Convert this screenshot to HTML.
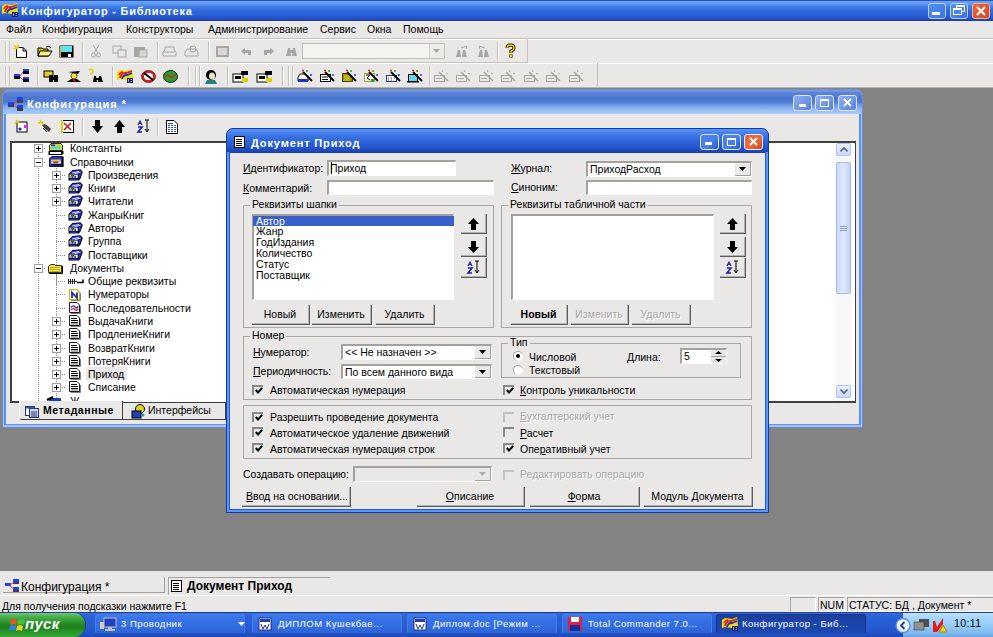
<!DOCTYPE html>
<html><head><meta charset="utf-8"><style>
*{margin:0;padding:0;box-sizing:border-box}
html,body{width:993px;height:637px;overflow:hidden;background:#838383;font-family:"Liberation Sans",sans-serif;font-size:10.5px;letter-spacing:0;color:#000}
.a{position:absolute}
.t{position:absolute;white-space:nowrap;line-height:11px}
.u{text-decoration:underline}
svg{overflow:visible}
</style></head><body>
<div class="a" style="left:0px;top:0px;width:993px;height:21px;background:linear-gradient(#2c52b8 0,#2c52b8 1px,#6aa2f4 1px,#5c98f0 4px,#3c7ae6 7px,#3068dc 11px,#2b60d6 15px,#2454ca 18px,#1c44b2 20px,#1a3ea8 21px)"></div>
<svg class="a" style="left:2px;top:3px;" width="16" height="14" viewBox="0 0 16 14"><path d="M0 3 L3 1 L10 2 L15 0 L16 9 L10 11 L3 10 L0 11Z" fill="#f0e000"/><path d="M3 9 Q4 4 9 4 L15 2" stroke="#e02020" stroke-width="1.8" fill="none"/><path d="M5 10 Q6 6 10 6 L15 4" stroke="#2030d0" stroke-width="1.8" fill="none"/><path d="M2 6 Q3 3 6 3" stroke="#e02020" stroke-width="1.4" fill="none"/><rect x="10" y="9" width="6" height="5" fill="#202060"/><path d="M11.5 10 L11.5 13 M13.5 10.5 L15 10.5 M13.5 12.5 L15 12.5" stroke="#c0c0ff" stroke-width="0.8"/></svg>
<div class="t" style="left:21px;top:5px;font-size:11px;font-weight:bold;color:#fff;letter-spacing:0.75px;line-height:13px">Конфигуратор - Библиотека</div>
<div class="a" style="left:928px;top:3px;width:18px;height:16px;border:1px solid #b8d0fa;border-radius:3px;background:linear-gradient(135deg,#5690f0 0,#3a72e0 100%)"></div>
<div class="a" style="left:950px;top:3px;width:18px;height:16px;border:1px solid #b8d0fa;border-radius:3px;background:linear-gradient(135deg,#5690f0 0,#3a72e0 100%)"></div>
<div class="a" style="left:972px;top:3px;width:18px;height:16px;border:1px solid #f4b090;border-radius:3px;background:linear-gradient(135deg,#e8683c 0,#d04a20 100%)"></div>
<div class="a" style="left:932px;top:12px;width:8px;height:3px;background:#fff"></div>
<div class="a" style="left:956px;top:5px;width:9px;height:7px;border:1px solid #fff;border-top-width:2px"></div>
<div class="a" style="left:953px;top:8px;width:9px;height:7px;border:1px solid #fff;border-top-width:2px;background:#4a84ec"></div>
<svg class="a" style="left:976px;top:6px;" width="10" height="10" viewBox="0 0 10 10"><path d="M1 1 L9 9 M9 1 L1 9" stroke="#fff" stroke-width="2"/></svg>
<div class="a" style="left:0px;top:21px;width:993px;height:67px;background:#e9e8e7"></div>
<div class="t" style="left:6px;top:24px;">Файл</div>
<div class="t" style="left:42px;top:24px;">Конфигурация</div>
<div class="t" style="left:126px;top:24px;">Конструкторы</div>
<div class="t" style="left:208px;top:24px;">Администрирование</div>
<div class="t" style="left:320px;top:24px;">Сервис</div>
<div class="t" style="left:367px;top:24px;">Окна</div>
<div class="t" style="left:403px;top:24px;">Помощь</div>
<div class="a" style="left:0px;top:38px;width:993px;height:1px;background:#c4c2bb"></div>
<div class="a" style="left:0px;top:39px;width:993px;height:1px;background:#fff"></div>
<div class="a" style="left:0px;top:62px;width:528px;height:1px;background:#c4c2bb"></div>
<div class="a" style="left:527px;top:39px;width:1px;height:24px;background:#c4c2bb"></div>
<div class="a" style="left:0px;top:63px;width:993px;height:1px;background:#fff"></div>
<div class="a" style="left:0px;top:87px;width:993px;height:1px;background:#b4b2ac"></div>
<div class="a" style="left:597px;top:63px;width:1px;height:25px;background:#c4c2bb"></div>
<div class="a" style="left:5px;top:41px;width:1px;height:20px;background:#c8c6bf"></div>
<div class="a" style="left:6px;top:41px;width:1px;height:20px;background:#fff"></div>
<div class="a" style="left:9px;top:41px;width:1px;height:20px;background:#c8c6bf"></div>
<div class="a" style="left:5px;top:66px;width:1px;height:20px;background:#c8c6bf"></div>
<div class="a" style="left:6px;top:66px;width:1px;height:20px;background:#fff"></div>
<div class="a" style="left:9px;top:66px;width:1px;height:20px;background:#c8c6bf"></div>
<div class="a" style="left:82px;top:41px;width:1px;height:20px;background:#c4c2bb"></div>
<div class="a" style="left:83px;top:41px;width:1px;height:20px;background:#fff"></div>
<div class="a" style="left:157px;top:41px;width:1px;height:20px;background:#c4c2bb"></div>
<div class="a" style="left:158px;top:41px;width:1px;height:20px;background:#fff"></div>
<div class="a" style="left:208px;top:41px;width:1px;height:20px;background:#c4c2bb"></div>
<div class="a" style="left:209px;top:41px;width:1px;height:20px;background:#fff"></div>
<div class="a" style="left:497px;top:41px;width:1px;height:20px;background:#c4c2bb"></div>
<div class="a" style="left:498px;top:41px;width:1px;height:20px;background:#fff"></div>
<div class="a" style="left:37px;top:66px;width:1px;height:20px;background:#c4c2bb"></div>
<div class="a" style="left:38px;top:66px;width:1px;height:20px;background:#fff"></div>
<div class="a" style="left:112px;top:66px;width:1px;height:20px;background:#c4c2bb"></div>
<div class="a" style="left:113px;top:66px;width:1px;height:20px;background:#fff"></div>
<div class="a" style="left:188px;top:66px;width:1px;height:20px;background:#c4c2bb"></div>
<div class="a" style="left:189px;top:66px;width:1px;height:20px;background:#fff"></div>
<div class="a" style="left:195px;top:66px;width:1px;height:20px;background:#c4c2bb"></div>
<div class="a" style="left:196px;top:66px;width:1px;height:20px;background:#fff"></div>
<div class="a" style="left:199px;top:66px;width:1px;height:20px;background:#c4c2bb"></div>
<div class="a" style="left:200px;top:66px;width:1px;height:20px;background:#fff"></div>
<div class="a" style="left:227px;top:66px;width:1px;height:20px;background:#c4c2bb"></div>
<div class="a" style="left:228px;top:66px;width:1px;height:20px;background:#fff"></div>
<div class="a" style="left:282px;top:66px;width:1px;height:20px;background:#c4c2bb"></div>
<div class="a" style="left:283px;top:66px;width:1px;height:20px;background:#fff"></div>
<div class="a" style="left:288px;top:66px;width:1px;height:20px;background:#c4c2bb"></div>
<div class="a" style="left:289px;top:66px;width:1px;height:20px;background:#fff"></div>
<div class="a" style="left:292px;top:66px;width:1px;height:20px;background:#c4c2bb"></div>
<div class="a" style="left:293px;top:66px;width:1px;height:20px;background:#fff"></div>
<div class="a" style="left:429px;top:66px;width:1px;height:20px;background:#c4c2bb"></div>
<div class="a" style="left:430px;top:66px;width:1px;height:20px;background:#fff"></div>
<svg class="a" style="left:13px;top:44px;" width="15" height="14" viewBox="0 0 15 14"><path d="M3.5 3.5 L10 3.5 L13.5 7 L13.5 13.5 L3.5 13.5Z" fill="#fff" stroke="#000"/><path d="M10 3.5 L10 7 L13.5 7" fill="none" stroke="#000"/><path d="M1 1 L5 5 M5 0.5 L5 4 M0.5 4.5 L4 4.5" stroke="#e8d000" stroke-width="1.6"/></svg>
<svg class="a" style="left:37px;top:45px;" width="16" height="12" viewBox="0 0 16 12"><path d="M1 3 L5 3 L6 4 L11 4 L11 11 L1 11Z" fill="#d8c000" stroke="#000"/><path d="M3 6 L15 6 L12 11 L1 11Z" fill="#f8f080" stroke="#000"/><path d="M9 2 Q12 0 14 3" stroke="#000" fill="none"/></svg>
<svg class="a" style="left:59px;top:45px;" width="15" height="13" viewBox="0 0 15 13"><rect x="0.5" y="0.5" width="14" height="12" fill="#000"/><rect x="2" y="1" width="11" height="6" fill="#60e0f0"/><rect x="1" y="1" width="1" height="11" fill="#c8b800"/><rect x="9" y="9" width="3" height="3" fill="#fff"/></svg>
<svg class="a" style="left:91px;top:44px;" width="10" height="14" viewBox="0 0 10 14"><path d="M2 1 L7 9 M8 1 L3 9" stroke="#a8a6a0"/><circle cx="2.5" cy="11" r="2" fill="none" stroke="#a8a6a0"/><circle cx="7.5" cy="11" r="2" fill="none" stroke="#a8a6a0"/></svg>
<svg class="a" style="left:112px;top:45px;" width="15" height="13" viewBox="0 0 15 13"><rect x="1" y="1" width="8" height="7" fill="none" stroke="#a8a6a0"/><rect x="6" y="5" width="8" height="7" fill="#e8e6e0" stroke="#a8a6a0"/></svg>
<svg class="a" style="left:133px;top:45px;" width="15" height="13" viewBox="0 0 15 13"><rect x="1" y="2" width="11" height="10" fill="#a8a6a0"/><rect x="6" y="5" width="8" height="7" fill="#d8d6d0" stroke="#a8a6a0"/></svg>
<svg class="a" style="left:162px;top:46px;" width="15" height="11" viewBox="0 0 15 11"><path d="M3 1 L12 1 L12 4 L14 6 L14 10 L1 10 L1 6 L3 4Z" fill="none" stroke="#a8a6a0"/><path d="M2 6 L13 6" stroke="#a8a6a0"/></svg>
<svg class="a" style="left:184px;top:45px;" width="16" height="12" viewBox="0 0 16 12"><path d="M3 4 L12 4 L14 7 L14 11 L1 11 L1 7Z" fill="none" stroke="#a8a6a0"/><circle cx="9" cy="4" r="3" fill="none" stroke="#a8a6a0"/></svg>
<svg class="a" style="left:215px;top:45px;" width="15" height="13" viewBox="0 0 15 13"><rect x="1" y="1" width="13" height="11" fill="#a8a6a0"/><rect x="3" y="3" width="9" height="7" fill="#d8d6d0"/></svg>
<svg class="a" style="left:240px;top:47px;" width="13" height="9" viewBox="0 0 13 9"><path d="M1 4 L5 1 L5 3 L11 3 L11 8 L8 8 L8 6 L5 6 L5 8Z" fill="#a8a6a0"/></svg>
<svg class="a" style="left:263px;top:47px;" width="12" height="9" viewBox="0 0 12 9"><path d="M11 4 L7 1 L7 3 L1 3 L1 8 L4 8 L4 6 L7 6 L7 8Z" fill="#a8a6a0"/></svg>
<svg class="a" style="left:285px;top:45px;" width="13" height="12" viewBox="0 0 13 12"><path d="M1 11 L3 3 L5 3 L6 11Z M7 11 L8 3 L10 3 L12 11Z" fill="#a8a6a0"/><rect x="4" y="5" width="5" height="3" fill="#a8a6a0"/></svg>
<div class="a" style="left:302px;top:43px;width:143px;height:16px;background:#f4f3ef;border:1px solid #c0beb8"></div>
<div class="a" style="left:429px;top:44px;width:15px;height:14px;background:#ecebe6;border-left:1px solid #d0cec8"></div>
<svg class="a" style="left:433px;top:49px;" width="7" height="4" viewBox="0 0 7 4"><path d="M0 0 L7 0 L3.5 4Z" fill="#a8a6a0"/></svg>
<svg class="a" style="left:455px;top:45px;" width="14" height="13" viewBox="0 0 14 13"><path d="M1 12 L3 5 L5 5 L6 12Z M7 12 L8 5 L10 5 L12 12Z" fill="#a8a6a0"/><path d="M6 3 L12 1 L11 4" stroke="#a8a6a0" fill="none"/></svg>
<svg class="a" style="left:477px;top:45px;" width="14" height="13" viewBox="0 0 14 13"><path d="M1 12 L3 5 L5 5 L6 12Z M7 12 L8 5 L10 5 L12 12Z" fill="#a8a6a0"/><path d="M8 3 L2 1 L3 4" stroke="#a8a6a0" fill="none"/></svg>
<svg class="a" style="left:505px;top:44px;" width="11" height="14" viewBox="0 0 11 14"><path d="M2 4 Q2 1 5.5 1 Q9 1 9 4 Q9 6 6 7 L6 9" stroke="#000" stroke-width="3" fill="none"/><path d="M2 4 Q2 1 5.5 1 Q9 1 9 4 Q9 6 6 7 L6 9" stroke="#f0e000" stroke-width="1.4" fill="none"/><rect x="4.5" y="10.5" width="3" height="3" fill="#000"/><rect x="5" y="11" width="2" height="2" fill="#f0e000"/></svg>
<svg class="a" style="left:13px;top:69px;" width="17" height="13" viewBox="0 0 17 13"><rect x="1" y="5" width="6" height="5" fill="#000"/><rect x="1" y="5" width="6" height="2" fill="#2040f0"/><rect x="10" y="0" width="6" height="5" fill="#000"/><rect x="10" y="0" width="6" height="2" fill="#2040f0"/><rect x="10" y="8" width="6" height="5" fill="#000"/><rect x="10" y="8" width="6" height="2" fill="#2040f0"/><path d="M7 7 L10 3 M7 8 L10 11" stroke="#d04040"/></svg>
<svg class="a" style="left:43px;top:70px;" width="17" height="13" viewBox="0 0 17 13"><rect x="1" y="1" width="9" height="6" fill="#e0d020" stroke="#000"/><rect x="6" y="5" width="4" height="7" fill="#000"/><rect x="11" y="5" width="4" height="7" fill="#000"/><rect x="9" y="7" width="3" height="3" fill="#000"/></svg>
<svg class="a" style="left:66px;top:69px;" width="16" height="14" viewBox="0 0 16 14"><path d="M2 3 L14 2 L12 5Z" fill="#000"/><circle cx="8" cy="7" r="3" fill="#f0e040" stroke="#000" stroke-width="0.6"/><path d="M1 13 L5 10 L11 10 L15 13Z" fill="#000"/><path d="M7 10 L9 13" stroke="#c02020" stroke-width="1.5"/></svg>
<svg class="a" style="left:88px;top:69px;" width="16" height="14" viewBox="0 0 16 14"><path d="M1 1 Q4 -1 5 2 Q5 4 3 5 L3 6" stroke="#e0d000" stroke-width="1.6" fill="none"/><path d="M5 13 L6 7 L8 7 L9 13Z M10 13 L11 7 L13 7 L15 13Z" fill="#000"/><rect x="7" y="9" width="5" height="2" fill="#000"/></svg>
<svg class="a" style="left:117px;top:69px;" width="16" height="14" viewBox="0 0 16 14"><path d="M0 3 L3 1 L10 2 L15 0 L16 9 L10 11 L3 10 L0 11Z" fill="#f0e000"/><path d="M3 9 Q4 4 9 4 L15 2" stroke="#e02020" stroke-width="1.8" fill="none"/><path d="M5 10 Q6 6 10 6 L15 4" stroke="#2030d0" stroke-width="1.8" fill="none"/><path d="M2 6 Q3 3 6 3" stroke="#e02020" stroke-width="1.4" fill="none"/><rect x="10" y="9" width="6" height="5" fill="#202060"/><path d="M11.5 10 L11.5 13 M13.5 10.5 L15 10.5 M13.5 12.5 L15 12.5" stroke="#c0c0ff" stroke-width="0.8"/></svg>
<svg class="a" style="left:141px;top:70px;" width="15" height="13" viewBox="0 0 15 13"><ellipse cx="7.5" cy="6.5" rx="7" ry="6" fill="#e02020" stroke="#000" stroke-width="0.6"/><ellipse cx="7.5" cy="6.5" rx="4.5" ry="3.5" fill="#fff"/><path d="M3 3 L12 10" stroke="#000" stroke-width="2"/></svg>
<svg class="a" style="left:163px;top:70px;" width="15" height="13" viewBox="0 0 15 13"><ellipse cx="7.5" cy="6.5" rx="7" ry="6" fill="#20a030" stroke="#000" stroke-width="0.8"/><path d="M2 7 L5 5 L8 8 L13 4" stroke="#e02020" stroke-width="1.5" fill="none"/></svg>
<svg class="a" style="left:203px;top:69px;" width="16" height="15" viewBox="0 0 16 15"><ellipse cx="8" cy="6" rx="5" ry="5" fill="#000"/><ellipse cx="9" cy="7" rx="3" ry="3.5" fill="#f0e0c0"/><path d="M2 15 L4 11 L12 11 L14 15Z" fill="#208080"/></svg>
<svg class="a" style="left:232px;top:69px;" width="17" height="14" viewBox="0 0 17 14"><rect x="1" y="5" width="10" height="8" fill="#fff" stroke="#000"/><rect x="3" y="7" width="6" height="3" fill="#000"/><path d="M9 2 L16 2 L16 6 L9 6Z" fill="#000"/><rect x="10" y="9" width="6" height="4" fill="#e0d000"/></svg>
<svg class="a" style="left:256px;top:69px;" width="17" height="14" viewBox="0 0 17 14"><rect x="1" y="5" width="10" height="8" fill="#fff" stroke="#000"/><rect x="3" y="7" width="6" height="3" fill="#000"/><path d="M9 2 L16 2 L16 6 L9 6Z" fill="#000"/><rect x="10" y="9" width="6" height="4" fill="#e0d000"/></svg>
<svg class="a" style="left:297px;top:69px;" width="17" height="15" viewBox="0 0 17 15"><path d="M1 8 L3 5 L9 5 L11 8 L11 12 L1 12Z" fill="#fff" stroke="#000" stroke-width="0.9"/><rect x="1" y="10" width="10" height="3" fill="#2030c0"/><path d="M6 3 L15 12" stroke="#000" stroke-width="1.8"/><circle cx="6" cy="1.5" r="1.1" fill="#e03030"/><circle cx="10" cy="2" r="1.1" fill="#20b020"/><circle cx="14" cy="6" r="1.1" fill="#3040e0"/></svg>
<svg class="a" style="left:319px;top:69px;" width="17" height="15" viewBox="0 0 17 15"><rect x="1.5" y="5.5" width="10" height="7" fill="#fff" stroke="#000"/><path d="M3 8 L9 8 M3 10.5 L9 10.5" stroke="#000"/><path d="M6 3 L15 12" stroke="#000" stroke-width="1.8"/><circle cx="6" cy="1.5" r="1.1" fill="#e03030"/><circle cx="10" cy="2" r="1.1" fill="#20b020"/><circle cx="14" cy="6" r="1.1" fill="#3040e0"/></svg>
<svg class="a" style="left:341px;top:69px;" width="17" height="15" viewBox="0 0 17 15"><path d="M1.5 4.5 L8 4.5 L11.5 8 L11.5 12.5 L1.5 12.5Z" fill="#a09000" stroke="#404000"/><path d="M3 7 L9 7 M3 9 L9 9 M3 11 L9 11" stroke="#e0d040"/><path d="M6 3 L15 12" stroke="#000" stroke-width="1.8"/><circle cx="6" cy="1.5" r="1.1" fill="#e03030"/><circle cx="10" cy="2" r="1.1" fill="#20b020"/><circle cx="14" cy="6" r="1.1" fill="#3040e0"/></svg>
<svg class="a" style="left:363px;top:69px;" width="17" height="15" viewBox="0 0 17 15"><rect x="1.5" y="4.5" width="10" height="8" fill="#fff" stroke="#b0a040"/><path d="M3 6 L7 6 L4 9 L7 11" stroke="#000" fill="none"/><rect x="8" y="10" width="3" height="3" fill="#20a020"/><path d="M6 3 L15 12" stroke="#000" stroke-width="1.8"/><circle cx="6" cy="1.5" r="1.1" fill="#e03030"/><circle cx="10" cy="2" r="1.1" fill="#20b020"/><circle cx="14" cy="6" r="1.1" fill="#3040e0"/></svg>
<svg class="a" style="left:385px;top:69px;" width="17" height="15" viewBox="0 0 17 15"><rect x="1.5" y="6.5" width="10" height="6" fill="#fff" stroke="#2030a0"/><path d="M3 9 L4 9 M6 9 L7 9 M9 9 L10 9 M3 11 L4 11 M6 11 L7 11" stroke="#404040"/><path d="M6 3 L15 12" stroke="#000" stroke-width="1.8"/><circle cx="6" cy="1.5" r="1.1" fill="#e03030"/><circle cx="10" cy="2" r="1.1" fill="#20b020"/><circle cx="14" cy="6" r="1.1" fill="#3040e0"/></svg>
<svg class="a" style="left:407px;top:69px;" width="17" height="15" viewBox="0 0 17 15"><rect x="1.5" y="5.5" width="9" height="7" fill="#60d8f0" stroke="#000"/><rect x="0" y="12" width="12" height="1.5" fill="#000"/><path d="M6 3 L15 12" stroke="#000" stroke-width="1.8"/><circle cx="6" cy="1.5" r="1.1" fill="#e03030"/><circle cx="10" cy="2" r="1.1" fill="#20b020"/><circle cx="14" cy="6" r="1.1" fill="#3040e0"/></svg>
<svg class="a" style="left:433px;top:69px;" width="17" height="15" viewBox="0 0 17 15"><rect x="1.5" y="6.5" width="10" height="6" fill="none" stroke="#a8a6a0"/><path d="M3 9.5 L9 9.5" stroke="#a8a6a0"/><path d="M6 3 L15 12" stroke="#a8a6a0" stroke-width="1.6"/><path d="M9 1 L10 3 M13 4 L15 5" stroke="#a8a6a0"/></svg>
<svg class="a" style="left:455px;top:69px;" width="17" height="15" viewBox="0 0 17 15"><rect x="1.5" y="6.5" width="10" height="6" fill="none" stroke="#a8a6a0"/><path d="M3 9.5 L9 9.5" stroke="#a8a6a0"/><path d="M6 3 L15 12" stroke="#a8a6a0" stroke-width="1.6"/><path d="M9 1 L10 3 M13 4 L15 5" stroke="#a8a6a0"/></svg>
<svg class="a" style="left:478px;top:69px;" width="17" height="15" viewBox="0 0 17 15"><rect x="1.5" y="6.5" width="10" height="6" fill="none" stroke="#a8a6a0"/><path d="M3 9.5 L9 9.5" stroke="#a8a6a0"/><path d="M6 3 L15 12" stroke="#a8a6a0" stroke-width="1.6"/><path d="M9 1 L10 3 M13 4 L15 5" stroke="#a8a6a0"/></svg>
<svg class="a" style="left:500px;top:69px;" width="17" height="15" viewBox="0 0 17 15"><rect x="1.5" y="6.5" width="10" height="6" fill="none" stroke="#a8a6a0"/><path d="M3 9.5 L9 9.5" stroke="#a8a6a0"/><path d="M6 3 L15 12" stroke="#a8a6a0" stroke-width="1.6"/><path d="M9 1 L10 3 M13 4 L15 5" stroke="#a8a6a0"/></svg>
<svg class="a" style="left:523px;top:69px;" width="17" height="15" viewBox="0 0 17 15"><rect x="1.5" y="6.5" width="10" height="6" fill="none" stroke="#a8a6a0"/><path d="M3 9.5 L9 9.5" stroke="#a8a6a0"/><path d="M6 3 L15 12" stroke="#a8a6a0" stroke-width="1.6"/><path d="M9 1 L10 3 M13 4 L15 5" stroke="#a8a6a0"/></svg>
<svg class="a" style="left:545px;top:69px;" width="17" height="15" viewBox="0 0 17 15"><rect x="1.5" y="6.5" width="10" height="6" fill="none" stroke="#a8a6a0"/><path d="M3 9.5 L9 9.5" stroke="#a8a6a0"/><path d="M6 3 L15 12" stroke="#a8a6a0" stroke-width="1.6"/><path d="M9 1 L10 3 M13 4 L15 5" stroke="#a8a6a0"/></svg>
<svg class="a" style="left:568px;top:69px;" width="17" height="15" viewBox="0 0 17 15"><rect x="1.5" y="6.5" width="10" height="6" fill="none" stroke="#a8a6a0"/><path d="M3 9.5 L9 9.5" stroke="#a8a6a0"/><path d="M6 3 L15 12" stroke="#a8a6a0" stroke-width="1.6"/><path d="M9 1 L10 3 M13 4 L15 5" stroke="#a8a6a0"/></svg>
<div class="a" style="left:0px;top:571px;width:993px;height:41px;background:#e9e8e7"></div>
<div class="a" style="left:0px;top:595px;width:993px;height:1px;background:#fff"></div>
<div class="a" style="left:3px;top:592px;width:162px;height:1px;background:#a4a29c"></div>
<div class="a" style="left:164px;top:577px;width:1px;height:16px;background:#a4a29c"></div>
<svg class="a" style="left:4px;top:578px;" width="16" height="14" viewBox="0 0 16 14"><rect x="9" y="1" width="6" height="3" fill="#2040f0"/><rect x="9" y="4" width="6" height="2" fill="#404040"/><rect x="1" y="5" width="6" height="3" fill="#2040f0"/><rect x="9" y="9" width="6" height="3" fill="#2040f0"/><rect x="9" y="12" width="6" height="2" fill="#404040"/><path d="M6 7 L10 4 M6 8 L10 11" stroke="#d04040"/></svg>
<div class="t" style="left:21px;top:581px;font-size:12px;line-height:13px">Конфигурация *</div>
<div class="a" style="left:168px;top:577px;width:162px;height:1px;background:#a4a29c"></div>
<div class="a" style="left:168px;top:577px;width:1px;height:18px;background:#a4a29c"></div>
<div class="a" style="left:169px;top:578px;width:1px;height:17px;background:#fff"></div>
<svg class="a" style="left:171px;top:580px;" width="12" height="12" viewBox="0 0 12 12"><rect x="0.5" y="0.5" width="10" height="11" fill="#fff" stroke="#000"/><path d="M2 3.5 L8 3.5 M2 5.5 L8 5.5 M2 7.5 L8 7.5 M2 9.5 L8 9.5" stroke="#000"/></svg>
<div class="t" style="left:187px;top:580px;font-weight:bold;font-size:12px;letter-spacing:0;line-height:13px">Документ Приход</div>
<div class="t" style="left:2px;top:601px;">Для получения подсказки нажмите F1</div>
<div class="a" style="left:790px;top:597px;width:26px;height:15px;border-top:1px solid #a8a6a0;border-left:1px solid #a8a6a0;border-bottom:1px solid #fff;border-right:1px solid #fff"></div>
<div class="a" style="left:818px;top:597px;width:27px;height:15px;border-top:1px solid #a8a6a0;border-left:1px solid #a8a6a0;border-bottom:1px solid #fff;border-right:1px solid #fff"></div>
<div class="t" style="left:820px;top:600px;">NUM</div>
<div class="a" style="left:847px;top:597px;width:146px;height:15px;border-top:1px solid #a8a6a0;border-left:1px solid #a8a6a0;border-bottom:1px solid #fff"></div>
<div class="t" style="left:849px;top:600px;">СТАТУС: БД , Документ *</div>
<div class="a" style="left:0px;top:612px;width:993px;height:25px;background:linear-gradient(#3c7cec 0,#2e68dc 2px,#2a62d8 5px,#275cd4 14px,#2456cc 20px,#1e48b8 25px)"></div>
<div class="a" style="left:0px;top:612px;width:993px;height:1px;background:#22409c"></div>
<div class="a" style="left:0px;top:613px;width:85px;height:24px;border-radius:0 11px 11px 0;background:linear-gradient(#78c878 0,#50b450 3px,#38a038 7px,#268a26 11px,#1f7f1f 14px,#2a962a 19px,#34aa34 24px);box-shadow:1px 0 1px #183c80"></div>
<svg class="a" style="left:10px;top:617px;" width="16" height="16" viewBox="0 0 16 16"><path d="M1 3 Q4 1 7 3 L6 8 Q3 6 0 8Z" fill="#f05020"/><path d="M8 3 Q11 1 15 3 L14 8 Q11 6 7 8Z" fill="#40c040"/><path d="M0 9 Q3 7 6 9 L5 14 Q2 12 -1 14Z" fill="#3080f0"/><path d="M7 9 Q10 7 13 9 L12 14 Q9 12 6 14Z" fill="#f0d020"/></svg>
<div class="t" style="left:25px;top:615px;font-size:15px;font-weight:bold;font-style:italic;color:#fff;letter-spacing:0.3px;line-height:17px">пуск</div>
<div class="a" style="left:95px;top:614px;width:150px;height:20px;border-radius:3px;background:linear-gradient(#3c7aec 0,#3672e6 5px,#306ade 14px,#2c62d6 19px);border:1px solid #4680ea;border-bottom-color:#2050c0"></div>
<div class="t" style="left:121px;top:618px;color:#fff;font-size:9.5px;letter-spacing:0.5px">3 Проводник</div>
<div class="a" style="left:252px;top:614px;width:150px;height:20px;border-radius:3px;background:linear-gradient(#3c7aec 0,#3672e6 5px,#306ade 14px,#2c62d6 19px);border:1px solid #4680ea;border-bottom-color:#2050c0"></div>
<div class="t" style="left:278px;top:618px;color:#fff;font-size:9.5px;letter-spacing:0.5px">ДИПЛОМ Кушекбае...</div>
<div class="a" style="left:407px;top:614px;width:150px;height:20px;border-radius:3px;background:linear-gradient(#3c7aec 0,#3672e6 5px,#306ade 14px,#2c62d6 19px);border:1px solid #4680ea;border-bottom-color:#2050c0"></div>
<div class="t" style="left:433px;top:618px;color:#fff;font-size:9.5px;letter-spacing:0.5px">Диплом.doc [Режим ...</div>
<div class="a" style="left:562px;top:614px;width:150px;height:20px;border-radius:3px;background:linear-gradient(#3c7aec 0,#3672e6 5px,#306ade 14px,#2c62d6 19px);border:1px solid #4680ea;border-bottom-color:#2050c0"></div>
<div class="t" style="left:588px;top:618px;color:#fff;font-size:9.5px;letter-spacing:0.5px">Total Commander 7.0...</div>
<div class="a" style="left:716px;top:614px;width:150px;height:20px;border-radius:3px;background:linear-gradient(#1a40a0 0,#1e48b0 100%);border:1px solid #163480;border-bottom-color:#2050c0"></div>
<div class="t" style="left:742px;top:618px;color:#fff;font-size:9.5px;letter-spacing:0.5px">Конфигуратор - Биб...</div>
<svg class="a" style="left:100px;top:617px;" width="17" height="14" viewBox="0 0 17 14"><rect x="4" y="1" width="12" height="9" fill="#2040c0" stroke="#c0c0c0"/><rect x="8" y="10" width="4" height="2" fill="#c0c0c0"/><rect x="5" y="12" width="10" height="2" fill="#c0c0c0"/><rect x="0" y="5" width="4" height="7" fill="#d0d0b0"/></svg>
<svg class="a" style="left:238px;top:622px;" width="7" height="4" viewBox="0 0 7 4"><path d="M0 0 L7 0 L3.5 4Z" fill="#fff"/></svg>
<svg class="a" style="left:258px;top:617px;" width="15" height="14" viewBox="0 0 15 14"><rect x="1" y="1" width="12" height="12" fill="#fff" stroke="#203080"/><rect x="2" y="2" width="10" height="3" fill="#2040b0"/><path d="M3 7 L5 12 L7 8 L9 12 L11 7" stroke="#203080" fill="none"/></svg>
<svg class="a" style="left:413px;top:617px;" width="15" height="14" viewBox="0 0 15 14"><rect x="1" y="1" width="12" height="12" fill="#fff" stroke="#203080"/><rect x="2" y="2" width="10" height="3" fill="#2040b0"/><path d="M3 7 L5 12 L7 8 L9 12 L11 7" stroke="#203080" fill="none"/></svg>
<svg class="a" style="left:568px;top:617px;" width="14" height="14" viewBox="0 0 14 14"><rect x="0" y="0" width="14" height="14" fill="#e02040"/><rect x="3" y="0" width="8" height="5" fill="#fff"/><rect x="2" y="8" width="10" height="6" fill="#1030a0"/></svg>
<svg class="a" style="left:722px;top:617px;" width="16" height="14" viewBox="0 0 16 14"><path d="M0 3 L3 1 L10 2 L15 0 L16 9 L10 11 L3 10 L0 11Z" fill="#f0e000"/><path d="M3 9 Q4 4 9 4 L15 2" stroke="#e02020" stroke-width="1.8" fill="none"/><path d="M5 10 Q6 6 10 6 L15 4" stroke="#2030d0" stroke-width="1.8" fill="none"/><path d="M2 6 Q3 3 6 3" stroke="#e02020" stroke-width="1.4" fill="none"/><rect x="10" y="9" width="6" height="5" fill="#202060"/><path d="M11.5 10 L11.5 13 M13.5 10.5 L15 10.5 M13.5 12.5 L15 12.5" stroke="#c0c0ff" stroke-width="0.8"/></svg>
<div class="a" style="left:903px;top:613px;width:90px;height:24px;background:linear-gradient(#c0e4fc 0,#a8d8fa 4px,#98ccf6 12px,#80b8f0 20px,#6aa4e8 24px)"></div>
<svg class="a" style="left:895px;top:618px;" width="16" height="15" viewBox="0 0 16 15"><circle cx="8" cy="7.5" r="7" fill="#f0f6ff" stroke="#5a8ad8" stroke-width="1.4"/><path d="M9.5 4 L6 7.5 L9.5 11" stroke="#203880" stroke-width="1.8" fill="none"/></svg>
<svg class="a" style="left:914px;top:619px;" width="16" height="12" viewBox="0 0 16 12"><rect x="5" y="0" width="10" height="8" fill="#505050"/><rect x="0" y="3" width="10" height="8" fill="#909090" stroke="#404040" stroke-width="0.6"/></svg>
<svg class="a" style="left:933px;top:618px;" width="15" height="16" viewBox="0 0 15 16"><path d="M0 3 L2 3 L4 9 L10 0 L10 6 L4 14 L0 14Z" fill="#e81818"/><path d="M6 14 L10 7 L14 14Z" fill="#f0d000" stroke="#907000" stroke-width="0.7"/></svg>
<div class="t" style="left:954px;top:618px;color:#000;font-size:10.5px;letter-spacing:0.4px">10:11</div>
<div class="a" style="left:2px;top:89px;width:861px;height:339px;border-radius:7px 7px 0 0;background:#a6c2f4;border:1px solid #6a8cd6"></div>
<div class="a" style="left:3px;top:90px;width:859px;height:24px;border-radius:6px 6px 0 0;background:linear-gradient(#7c9ee6 0,#5a82d6 3px,#4c76d2 8px,#4f7ad4 12px,#78a2e8 16px,#9cc2f6 21px,#a8caf8 24px)"></div>
<svg class="a" style="left:8px;top:97px;" width="16" height="14" viewBox="0 0 16 14"><rect x="9" y="0" width="6" height="3" fill="#2040f0"/><rect x="9" y="3" width="6" height="3" fill="#404040"/><rect x="0" y="5" width="6" height="3" fill="#2040f0"/><rect x="0" y="8" width="6" height="2" fill="#404040"/><rect x="9" y="8" width="6" height="3" fill="#2040f0"/><rect x="9" y="11" width="6" height="3" fill="#404040"/><path d="M6 7 L9 3 M6 8 L9 11" stroke="#d04040"/></svg>
<div class="t" style="left:27px;top:98px;font-size:11px;font-weight:bold;color:#fff;letter-spacing:0.9px;line-height:13px">Конфигурация *</div>
<div class="a" style="left:793px;top:95px;width:19px;height:16px;border:1px solid #dce6fa;border-radius:3px;background:linear-gradient(135deg,#8cb0f0 0,#6890e0 70%,#5a80d4 100%)"></div>
<div class="a" style="left:815px;top:95px;width:19px;height:16px;border:1px solid #dce6fa;border-radius:3px;background:linear-gradient(135deg,#8cb0f0 0,#6890e0 70%,#5a80d4 100%)"></div>
<div class="a" style="left:838px;top:95px;width:19px;height:16px;border:1px solid #dce6fa;border-radius:3px;background:linear-gradient(135deg,#8cb0f0 0,#6890e0 70%,#5a80d4 100%)"></div>
<div class="a" style="left:799px;top:104px;width:7px;height:3px;background:#fff"></div>
<div class="a" style="left:820px;top:99px;width:9px;height:8px;border:1px solid #fff;border-top-width:2px"></div>
<svg class="a" style="left:843px;top:98px;" width="9" height="9" viewBox="0 0 9 9"><path d="M1 1 L8 8 M8 1 L1 8" stroke="#fff" stroke-width="1.8"/></svg>
<div class="a" style="left:4px;top:114px;width:857px;height:311px;background:#5a94f0"></div>
<div class="a" style="left:6px;top:114px;width:853px;height:310px;background:#e9e8e7"></div>
<svg class="a" style="left:15px;top:120px;" width="13" height="13" viewBox="0 0 13 13"><rect x="2" y="2" width="10" height="10" fill="#fff" stroke="#000"/><circle cx="5" cy="9" r="1.6" fill="#2020e0"/><rect x="9" y="5" width="3" height="3" fill="#f020f0"/><path d="M1 0 L4 3 M0 3 L4 1" stroke="#e0d000" stroke-width="1.5"/></svg>
<svg class="a" style="left:37px;top:119px;" width="16" height="15" viewBox="0 0 16 15"><path d="M3 1 L6 5 M1 4 L6 3" stroke="#e0d000" stroke-width="1.5"/><path d="M5 6 Q8 4 11 7 L14 10 L12 13 L8 10Z" fill="#404040"/><path d="M6 9 L10 13" stroke="#000"/></svg>
<svg class="a" style="left:61px;top:120px;" width="13" height="13" viewBox="0 0 13 13"><rect x="0.5" y="0.5" width="12" height="12" fill="#fff" stroke="#000"/><rect x="0" y="0" width="2" height="13" fill="#e0d000"/><path d="M3 3 L10 10 M10 3 L3 10" stroke="#c02020" stroke-width="1.6"/></svg>
<div class="a" style="left:82px;top:118px;width:1px;height:18px;background:#c4c2bb"></div>
<div class="a" style="left:83px;top:118px;width:1px;height:18px;background:#fff"></div>
<svg class="a" style="left:92px;top:120px;" width="11" height="13" viewBox="0 0 11 13"><path d="M3 0 L8 0 L8 6 L11 6 L5.5 13 L0 6 L3 6Z" fill="#000"/></svg>
<svg class="a" style="left:114px;top:120px;" width="11" height="13" viewBox="0 0 11 13"><path d="M3 13 L8 13 L8 7 L11 7 L5.5 0 L0 7 L3 7Z" fill="#000"/></svg>
<svg class="a" style="left:137px;top:120px;" width="14" height="13" viewBox="0 0 14 13"><path d="M1 5 L3 1 L5 5 M1.8 3.5 L4.2 3.5" stroke="#2020a0" fill="none" stroke-width="1.2"/><path d="M1 7 L5 7 L1 12 L5 12" stroke="#2020a0" fill="none" stroke-width="1.6"/><path d="M10 0 L10 12 M8 0 L12 0 M8 9 L10 12 L12 9" stroke="#000" fill="none"/></svg>
<div class="a" style="left:157px;top:118px;width:1px;height:18px;background:#c4c2bb"></div>
<div class="a" style="left:158px;top:118px;width:1px;height:18px;background:#fff"></div>
<svg class="a" style="left:166px;top:120px;" width="12" height="14" viewBox="0 0 12 14"><path d="M0.5 0.5 L8 0.5 L11.5 4 L11.5 13.5 L0.5 13.5Z" fill="#fff" stroke="#000"/><path d="M2 3.5 L7 3.5 M2 5.5 L10 5.5 M2 7.5 L10 7.5 M2 9.5 L10 9.5 M2 11.5 L10 11.5" stroke="#3050b0"/><path d="M4.5 5 L4.5 12 M7.5 5 L7.5 12" stroke="#fff"/></svg>
<div class="a" style="left:10px;top:141px;width:846px;height:262px;background:#fff;border-top:2px solid #404040;border-left:2px solid #404040;border-right:1px solid #404040;border-bottom:1px solid #404040"></div>
<div class="a" style="left:835px;top:143px;width:17px;height:259px;background:#f8f8f6"></div>
<div class="a" style="left:836px;top:143px;width:15px;height:13px;border:1px solid #b0c4ec;border-radius:2px;background:linear-gradient(#e8f0fe,#c8d8f8)"></div>
<svg class="a" style="left:840px;top:147px;" width="8" height="5" viewBox="0 0 8 5"><path d="M0.5 4.5 L4 1 L7.5 4.5" stroke="#4d6185" stroke-width="1.6" fill="none"/></svg>
<div class="a" style="left:836px;top:162px;width:15px;height:132px;border:1px solid #a8bce8;border-radius:2px;background:linear-gradient(90deg,#c8d8fa,#e0eafe 50%,#c0d2f6)"></div>
<div class="a" style="left:840px;top:226px;width:7px;height:1px;background:#8aa0d0"></div>
<div class="a" style="left:840px;top:228px;width:7px;height:1px;background:#8aa0d0"></div>
<div class="a" style="left:840px;top:230px;width:7px;height:1px;background:#8aa0d0"></div>
<div class="a" style="left:836px;top:385px;width:15px;height:13px;border:1px solid #b0c4ec;border-radius:2px;background:linear-gradient(#e8f0fe,#c8d8f8)"></div>
<svg class="a" style="left:840px;top:389px;" width="8" height="5" viewBox="0 0 8 5"><path d="M0.5 0.5 L4 4 L7.5 0.5" stroke="#4d6185" stroke-width="1.6" fill="none"/></svg>
<div class="a" style="left:38px;top:152px;width:1px;height:249px;background-image:linear-gradient(#909090 50%,transparent 50%);background-size:1px 2px"></div>
<div class="a" style="left:56px;top:162px;width:1px;height:124px;background-image:linear-gradient(#909090 50%,transparent 50%);background-size:1px 2px"></div>
<div class="a" style="left:56px;top:275px;width:1px;height:126px;background-image:linear-gradient(#909090 50%,transparent 50%);background-size:1px 2px"></div>
<div class="a" style="left:38px;top:148px;width:8px;height:1px;background-image:linear-gradient(90deg,#909090 50%,transparent 50%);background-size:2px 1px"></div>
<div class="a" style="left:34px;top:144px;width:9px;height:9px;background:#fff;border:1px solid #a0a0a0"></div>
<div class="a" style="left:36px;top:148px;width:5px;height:1px;background:#000"></div>
<div class="a" style="left:38px;top:146px;width:1px;height:5px;background:#000"></div>
<svg class="a" style="left:48px;top:143px;" width="16" height="13" viewBox="0 0 16 13"><path d="M1.5 2.5 L3 0.5 L13 0.5 L14.5 2.5 L14.5 7.5 L1.5 7.5Z" fill="#e8d800" stroke="#000" stroke-width="0.8"/><rect x="3" y="3" width="10" height="3" fill="#50d8f0"/><rect x="3" y="1.5" width="4" height="1.5" fill="#2030c0"/><path d="M0.5 8 L15.5 8 L15.5 10.5 L14 12 L0.5 12Z" fill="#000"/><rect x="2" y="9" width="11" height="2" fill="#fff"/></svg>
<div class="t" style="left:70px;top:143px;">Константы</div>
<div class="a" style="left:38px;top:162px;width:8px;height:1px;background-image:linear-gradient(90deg,#909090 50%,transparent 50%);background-size:2px 1px"></div>
<div class="a" style="left:34px;top:158px;width:9px;height:9px;background:#fff;border:1px solid #a0a0a0"></div>
<div class="a" style="left:36px;top:162px;width:5px;height:1px;background:#000"></div>
<svg class="a" style="left:48px;top:156px;" width="16" height="13" viewBox="0 0 16 13"><path d="M1.5 2.5 L4 0.5 L14 0.5 L14 10.5 L1.5 10.5Z" fill="#2838e0" stroke="#000" stroke-width="0.8"/><rect x="3" y="3.5" width="10" height="1.6" fill="#e8d800"/><rect x="3" y="5.5" width="10" height="2" fill="#fff"/><rect x="5" y="5.5" width="5" height="1.5" fill="#e02020"/><rect x="3" y="8" width="10" height="1.5" fill="#000"/><rect x="14" y="0.5" width="1.6" height="10.5" fill="#000"/></svg>
<div class="t" style="left:70px;top:157px;">Справочники</div>
<div class="a" style="left:56px;top:175px;width:10px;height:1px;background-image:linear-gradient(90deg,#909090 50%,transparent 50%);background-size:2px 1px"></div>
<div class="a" style="left:52px;top:171px;width:9px;height:9px;background:#fff;border:1px solid #a0a0a0"></div>
<div class="a" style="left:54px;top:175px;width:5px;height:1px;background:#000"></div>
<div class="a" style="left:56px;top:173px;width:1px;height:5px;background:#000"></div>
<svg class="a" style="left:68px;top:169px;" width="16" height="13" viewBox="0 0 16 13"><path d="M0.5 5 L4.5 1 L12.5 0.3 L14.8 3 L12.5 9.5 L10.8 11.6 L0.5 11.6Z" fill="#000"/><path d="M1.5 4.8 L5 1.8 L12 1.2 L13.6 3 L10 5Z" fill="#2838f0"/><path d="M4 4 L11 2.4 M6.5 4.6 L12.8 3.2" stroke="#fff" stroke-width="0.8"/><rect x="1.5" y="5.6" width="8.2" height="3.4" fill="#fff"/><path d="M3 9 L3 6.6 L4.6 6.6 L4.6 9 M4.6 6.6 L6.2 6.6 L6.2 9 M7.6 9 L7.6 6.6" stroke="#000" stroke-width="0.8" fill="none"/><rect x="2" y="9.6" width="7.5" height="1.2" fill="#2838f0"/><path d="M10.6 5.6 L13.6 3.6 L11.6 9 L10.6 10Z" fill="#2838f0"/></svg>
<div class="t" style="left:88px;top:170px;">Произведения</div>
<div class="a" style="left:56px;top:188px;width:10px;height:1px;background-image:linear-gradient(90deg,#909090 50%,transparent 50%);background-size:2px 1px"></div>
<div class="a" style="left:52px;top:184px;width:9px;height:9px;background:#fff;border:1px solid #a0a0a0"></div>
<div class="a" style="left:54px;top:188px;width:5px;height:1px;background:#000"></div>
<div class="a" style="left:56px;top:186px;width:1px;height:5px;background:#000"></div>
<svg class="a" style="left:68px;top:182px;" width="16" height="13" viewBox="0 0 16 13"><path d="M0.5 5 L4.5 1 L12.5 0.3 L14.8 3 L12.5 9.5 L10.8 11.6 L0.5 11.6Z" fill="#000"/><path d="M1.5 4.8 L5 1.8 L12 1.2 L13.6 3 L10 5Z" fill="#2838f0"/><path d="M4 4 L11 2.4 M6.5 4.6 L12.8 3.2" stroke="#fff" stroke-width="0.8"/><rect x="1.5" y="5.6" width="8.2" height="3.4" fill="#fff"/><path d="M3 9 L3 6.6 L4.6 6.6 L4.6 9 M4.6 6.6 L6.2 6.6 L6.2 9 M7.6 9 L7.6 6.6" stroke="#000" stroke-width="0.8" fill="none"/><rect x="2" y="9.6" width="7.5" height="1.2" fill="#2838f0"/><path d="M10.6 5.6 L13.6 3.6 L11.6 9 L10.6 10Z" fill="#2838f0"/></svg>
<div class="t" style="left:88px;top:183px;">Книги</div>
<div class="a" style="left:56px;top:201px;width:10px;height:1px;background-image:linear-gradient(90deg,#909090 50%,transparent 50%);background-size:2px 1px"></div>
<div class="a" style="left:52px;top:197px;width:9px;height:9px;background:#fff;border:1px solid #a0a0a0"></div>
<div class="a" style="left:54px;top:201px;width:5px;height:1px;background:#000"></div>
<div class="a" style="left:56px;top:199px;width:1px;height:5px;background:#000"></div>
<svg class="a" style="left:68px;top:195px;" width="16" height="13" viewBox="0 0 16 13"><path d="M0.5 5 L4.5 1 L12.5 0.3 L14.8 3 L12.5 9.5 L10.8 11.6 L0.5 11.6Z" fill="#000"/><path d="M1.5 4.8 L5 1.8 L12 1.2 L13.6 3 L10 5Z" fill="#2838f0"/><path d="M4 4 L11 2.4 M6.5 4.6 L12.8 3.2" stroke="#fff" stroke-width="0.8"/><rect x="1.5" y="5.6" width="8.2" height="3.4" fill="#fff"/><path d="M3 9 L3 6.6 L4.6 6.6 L4.6 9 M4.6 6.6 L6.2 6.6 L6.2 9 M7.6 9 L7.6 6.6" stroke="#000" stroke-width="0.8" fill="none"/><rect x="2" y="9.6" width="7.5" height="1.2" fill="#2838f0"/><path d="M10.6 5.6 L13.6 3.6 L11.6 9 L10.6 10Z" fill="#2838f0"/></svg>
<div class="t" style="left:88px;top:196px;">Читатели</div>
<div class="a" style="left:56px;top:215px;width:10px;height:1px;background-image:linear-gradient(90deg,#909090 50%,transparent 50%);background-size:2px 1px"></div>
<svg class="a" style="left:68px;top:209px;" width="16" height="13" viewBox="0 0 16 13"><path d="M0.5 5 L4.5 1 L12.5 0.3 L14.8 3 L12.5 9.5 L10.8 11.6 L0.5 11.6Z" fill="#000"/><path d="M1.5 4.8 L5 1.8 L12 1.2 L13.6 3 L10 5Z" fill="#2838f0"/><path d="M4 4 L11 2.4 M6.5 4.6 L12.8 3.2" stroke="#fff" stroke-width="0.8"/><rect x="1.5" y="5.6" width="8.2" height="3.4" fill="#fff"/><path d="M3 9 L3 6.6 L4.6 6.6 L4.6 9 M4.6 6.6 L6.2 6.6 L6.2 9 M7.6 9 L7.6 6.6" stroke="#000" stroke-width="0.8" fill="none"/><rect x="2" y="9.6" width="7.5" height="1.2" fill="#2838f0"/><path d="M10.6 5.6 L13.6 3.6 L11.6 9 L10.6 10Z" fill="#2838f0"/></svg>
<div class="t" style="left:88px;top:210px;">ЖанрыКниг</div>
<div class="a" style="left:56px;top:228px;width:10px;height:1px;background-image:linear-gradient(90deg,#909090 50%,transparent 50%);background-size:2px 1px"></div>
<svg class="a" style="left:68px;top:222px;" width="16" height="13" viewBox="0 0 16 13"><path d="M0.5 5 L4.5 1 L12.5 0.3 L14.8 3 L12.5 9.5 L10.8 11.6 L0.5 11.6Z" fill="#000"/><path d="M1.5 4.8 L5 1.8 L12 1.2 L13.6 3 L10 5Z" fill="#2838f0"/><path d="M4 4 L11 2.4 M6.5 4.6 L12.8 3.2" stroke="#fff" stroke-width="0.8"/><rect x="1.5" y="5.6" width="8.2" height="3.4" fill="#fff"/><path d="M3 9 L3 6.6 L4.6 6.6 L4.6 9 M4.6 6.6 L6.2 6.6 L6.2 9 M7.6 9 L7.6 6.6" stroke="#000" stroke-width="0.8" fill="none"/><rect x="2" y="9.6" width="7.5" height="1.2" fill="#2838f0"/><path d="M10.6 5.6 L13.6 3.6 L11.6 9 L10.6 10Z" fill="#2838f0"/></svg>
<div class="t" style="left:88px;top:223px;">Авторы</div>
<div class="a" style="left:56px;top:241px;width:10px;height:1px;background-image:linear-gradient(90deg,#909090 50%,transparent 50%);background-size:2px 1px"></div>
<svg class="a" style="left:68px;top:235px;" width="16" height="13" viewBox="0 0 16 13"><path d="M0.5 5 L4.5 1 L12.5 0.3 L14.8 3 L12.5 9.5 L10.8 11.6 L0.5 11.6Z" fill="#000"/><path d="M1.5 4.8 L5 1.8 L12 1.2 L13.6 3 L10 5Z" fill="#2838f0"/><path d="M4 4 L11 2.4 M6.5 4.6 L12.8 3.2" stroke="#fff" stroke-width="0.8"/><rect x="1.5" y="5.6" width="8.2" height="3.4" fill="#fff"/><path d="M3 9 L3 6.6 L4.6 6.6 L4.6 9 M4.6 6.6 L6.2 6.6 L6.2 9 M7.6 9 L7.6 6.6" stroke="#000" stroke-width="0.8" fill="none"/><rect x="2" y="9.6" width="7.5" height="1.2" fill="#2838f0"/><path d="M10.6 5.6 L13.6 3.6 L11.6 9 L10.6 10Z" fill="#2838f0"/></svg>
<div class="t" style="left:88px;top:236px;">Группа</div>
<div class="a" style="left:56px;top:255px;width:10px;height:1px;background-image:linear-gradient(90deg,#909090 50%,transparent 50%);background-size:2px 1px"></div>
<svg class="a" style="left:68px;top:249px;" width="16" height="13" viewBox="0 0 16 13"><path d="M0.5 5 L4.5 1 L12.5 0.3 L14.8 3 L12.5 9.5 L10.8 11.6 L0.5 11.6Z" fill="#000"/><path d="M1.5 4.8 L5 1.8 L12 1.2 L13.6 3 L10 5Z" fill="#2838f0"/><path d="M4 4 L11 2.4 M6.5 4.6 L12.8 3.2" stroke="#fff" stroke-width="0.8"/><rect x="1.5" y="5.6" width="8.2" height="3.4" fill="#fff"/><path d="M3 9 L3 6.6 L4.6 6.6 L4.6 9 M4.6 6.6 L6.2 6.6 L6.2 9 M7.6 9 L7.6 6.6" stroke="#000" stroke-width="0.8" fill="none"/><rect x="2" y="9.6" width="7.5" height="1.2" fill="#2838f0"/><path d="M10.6 5.6 L13.6 3.6 L11.6 9 L10.6 10Z" fill="#2838f0"/></svg>
<div class="t" style="left:88px;top:250px;">Поставщики</div>
<div class="a" style="left:38px;top:268px;width:8px;height:1px;background-image:linear-gradient(90deg,#909090 50%,transparent 50%);background-size:2px 1px"></div>
<div class="a" style="left:34px;top:264px;width:9px;height:9px;background:#fff;border:1px solid #a0a0a0"></div>
<div class="a" style="left:36px;top:268px;width:5px;height:1px;background:#000"></div>
<svg class="a" style="left:48px;top:263px;" width="16" height="13" viewBox="0 0 16 13"><path d="M0.5 3.5 L3 1.5 L6.5 1.5 L7.5 2.5 L13.5 2.5 L13.5 9.5 L0.5 9.5Z" fill="#f0e060" stroke="#000" stroke-width="0.8"/><path d="M2 4.5 L12 4.5 M2 6.5 L12 6.5 M2 8.5 L12 8.5" stroke="#c8b000" stroke-width="1"/><path d="M14 3 L14.5 3 L14.5 10.5 L1 10.5" stroke="#000" fill="none"/></svg>
<div class="t" style="left:70px;top:263px;">Документы</div>
<div class="a" style="left:56px;top:281px;width:10px;height:1px;background-image:linear-gradient(90deg,#909090 50%,transparent 50%);background-size:2px 1px"></div>
<svg class="a" style="left:68px;top:278px;" width="16" height="13" viewBox="0 0 16 13"><path d="M0.5 1 L0.5 6 M2.5 1 L2.5 6 M4.5 1 L4.5 6 M6.5 1 L6.5 6" stroke="#000" stroke-width="0.9"/><path d="M0 3.5 L9 3.5" stroke="#404040" stroke-width="1.2"/><path d="M9 4.5 L15 4.5 M15 1.5 L15 5" stroke="#000" stroke-width="1.6"/></svg>
<div class="t" style="left:88px;top:276px;">Общие реквизиты</div>
<div class="a" style="left:56px;top:294px;width:10px;height:1px;background-image:linear-gradient(90deg,#909090 50%,transparent 50%);background-size:2px 1px"></div>
<svg class="a" style="left:68px;top:288px;" width="16" height="13" viewBox="0 0 16 13"><path d="M1.5 1.5 L9 1.5 L11.5 4 L11.5 11.5 L1.5 11.5Z" fill="#fff" stroke="#c8b800" stroke-width="1.2"/><path d="M12.5 5 L12.5 12.5 L3 12.5" stroke="#808080" fill="none"/><path d="M4 10 L4 4.5 L9 10 L9 4.5" stroke="#1828b8" stroke-width="1.8" fill="none"/></svg>
<div class="t" style="left:88px;top:289px;">Нумераторы</div>
<div class="a" style="left:56px;top:308px;width:10px;height:1px;background-image:linear-gradient(90deg,#909090 50%,transparent 50%);background-size:2px 1px"></div>
<svg class="a" style="left:68px;top:302px;" width="16" height="13" viewBox="0 0 16 13"><path d="M1.5 0.5 L9 0.5 L11.5 3 L11.5 10.5 L1.5 10.5Z" fill="#fff" stroke="#000" stroke-width="0.9"/><path d="M12.5 4 L12.5 11.5 L2.5 11.5" stroke="#808080" fill="none"/><path d="M3 5.5 Q5 2.5 7 5 Q9 7 10 4" stroke="#2040e0" stroke-width="1.4" fill="none"/><path d="M3 8 Q5 5.5 7 7.5 Q8.5 9.5 10 6.5" stroke="#e02020" stroke-width="1.4" fill="none"/></svg>
<div class="t" style="left:88px;top:303px;">Последовательности</div>
<div class="a" style="left:56px;top:321px;width:10px;height:1px;background-image:linear-gradient(90deg,#909090 50%,transparent 50%);background-size:2px 1px"></div>
<div class="a" style="left:52px;top:317px;width:9px;height:9px;background:#fff;border:1px solid #a0a0a0"></div>
<div class="a" style="left:54px;top:321px;width:5px;height:1px;background:#000"></div>
<div class="a" style="left:56px;top:319px;width:1px;height:5px;background:#000"></div>
<svg class="a" style="left:68px;top:315px;" width="16" height="13" viewBox="0 0 16 13"><path d="M1.5 0.5 L9 0.5 L11.5 3 L11.5 10.5 L1.5 10.5Z" fill="#fff" stroke="#000" stroke-width="0.9"/><path d="M12.5 4 L12.5 11.5 L2.5 11.5" stroke="#808080" fill="none"/><path d="M3 3.5 L9 3.5 M3 5.5 L10 5.5 M3 7.5 L10 7.5" stroke="#000" stroke-width="1"/><path d="M3 9 L10 9" stroke="#606060" stroke-width="1"/></svg>
<div class="t" style="left:88px;top:316px;">ВыдачаКниги</div>
<div class="a" style="left:56px;top:334px;width:10px;height:1px;background-image:linear-gradient(90deg,#909090 50%,transparent 50%);background-size:2px 1px"></div>
<div class="a" style="left:52px;top:330px;width:9px;height:9px;background:#fff;border:1px solid #a0a0a0"></div>
<div class="a" style="left:54px;top:334px;width:5px;height:1px;background:#000"></div>
<div class="a" style="left:56px;top:332px;width:1px;height:5px;background:#000"></div>
<svg class="a" style="left:68px;top:328px;" width="16" height="13" viewBox="0 0 16 13"><path d="M1.5 0.5 L9 0.5 L11.5 3 L11.5 10.5 L1.5 10.5Z" fill="#fff" stroke="#000" stroke-width="0.9"/><path d="M12.5 4 L12.5 11.5 L2.5 11.5" stroke="#808080" fill="none"/><path d="M3 3.5 L9 3.5 M3 5.5 L10 5.5 M3 7.5 L10 7.5" stroke="#000" stroke-width="1"/><path d="M3 9 L10 9" stroke="#606060" stroke-width="1"/></svg>
<div class="t" style="left:88px;top:329px;">ПродлениеКниги</div>
<div class="a" style="left:56px;top:348px;width:10px;height:1px;background-image:linear-gradient(90deg,#909090 50%,transparent 50%);background-size:2px 1px"></div>
<div class="a" style="left:52px;top:344px;width:9px;height:9px;background:#fff;border:1px solid #a0a0a0"></div>
<div class="a" style="left:54px;top:348px;width:5px;height:1px;background:#000"></div>
<div class="a" style="left:56px;top:346px;width:1px;height:5px;background:#000"></div>
<svg class="a" style="left:68px;top:342px;" width="16" height="13" viewBox="0 0 16 13"><path d="M1.5 0.5 L9 0.5 L11.5 3 L11.5 10.5 L1.5 10.5Z" fill="#fff" stroke="#000" stroke-width="0.9"/><path d="M12.5 4 L12.5 11.5 L2.5 11.5" stroke="#808080" fill="none"/><path d="M3 3.5 L9 3.5 M3 5.5 L10 5.5 M3 7.5 L10 7.5" stroke="#000" stroke-width="1"/><path d="M3 9 L10 9" stroke="#606060" stroke-width="1"/></svg>
<div class="t" style="left:88px;top:343px;">ВозвратКниги</div>
<div class="a" style="left:56px;top:361px;width:10px;height:1px;background-image:linear-gradient(90deg,#909090 50%,transparent 50%);background-size:2px 1px"></div>
<div class="a" style="left:52px;top:357px;width:9px;height:9px;background:#fff;border:1px solid #a0a0a0"></div>
<div class="a" style="left:54px;top:361px;width:5px;height:1px;background:#000"></div>
<div class="a" style="left:56px;top:359px;width:1px;height:5px;background:#000"></div>
<svg class="a" style="left:68px;top:355px;" width="16" height="13" viewBox="0 0 16 13"><path d="M1.5 0.5 L9 0.5 L11.5 3 L11.5 10.5 L1.5 10.5Z" fill="#fff" stroke="#000" stroke-width="0.9"/><path d="M12.5 4 L12.5 11.5 L2.5 11.5" stroke="#808080" fill="none"/><path d="M3 3.5 L9 3.5 M3 5.5 L10 5.5 M3 7.5 L10 7.5" stroke="#000" stroke-width="1"/><path d="M3 9 L10 9" stroke="#606060" stroke-width="1"/></svg>
<div class="t" style="left:88px;top:356px;">ПотеряКниги</div>
<div class="a" style="left:56px;top:374px;width:10px;height:1px;background-image:linear-gradient(90deg,#909090 50%,transparent 50%);background-size:2px 1px"></div>
<div class="a" style="left:52px;top:370px;width:9px;height:9px;background:#fff;border:1px solid #a0a0a0"></div>
<div class="a" style="left:54px;top:374px;width:5px;height:1px;background:#000"></div>
<div class="a" style="left:56px;top:372px;width:1px;height:5px;background:#000"></div>
<svg class="a" style="left:68px;top:368px;" width="16" height="13" viewBox="0 0 16 13"><path d="M1.5 0.5 L9 0.5 L11.5 3 L11.5 10.5 L1.5 10.5Z" fill="#fff" stroke="#000" stroke-width="0.9"/><path d="M12.5 4 L12.5 11.5 L2.5 11.5" stroke="#808080" fill="none"/><path d="M3 3.5 L9 3.5 M3 5.5 L10 5.5 M3 7.5 L10 7.5" stroke="#000" stroke-width="1"/><path d="M3 9 L10 9" stroke="#606060" stroke-width="1"/></svg>
<div class="a" style="left:86px;top:367px;width:41px;height:13px;background:#e9e8e7"></div>
<div class="t" style="left:88px;top:369px;">Приход</div>
<div class="a" style="left:56px;top:387px;width:10px;height:1px;background-image:linear-gradient(90deg,#909090 50%,transparent 50%);background-size:2px 1px"></div>
<div class="a" style="left:52px;top:383px;width:9px;height:9px;background:#fff;border:1px solid #a0a0a0"></div>
<div class="a" style="left:54px;top:387px;width:5px;height:1px;background:#000"></div>
<div class="a" style="left:56px;top:385px;width:1px;height:5px;background:#000"></div>
<svg class="a" style="left:68px;top:381px;" width="16" height="13" viewBox="0 0 16 13"><path d="M1.5 0.5 L9 0.5 L11.5 3 L11.5 10.5 L1.5 10.5Z" fill="#fff" stroke="#000" stroke-width="0.9"/><path d="M12.5 4 L12.5 11.5 L2.5 11.5" stroke="#808080" fill="none"/><path d="M3 3.5 L9 3.5 M3 5.5 L10 5.5 M3 7.5 L10 7.5" stroke="#000" stroke-width="1"/><path d="M3 9 L10 9" stroke="#606060" stroke-width="1"/></svg>
<div class="t" style="left:88px;top:382px;">Списание</div>
<svg class="a" style="left:47px;top:395px;" width="16" height="7" viewBox="0 0 16 7"><rect x="2" y="3" width="12" height="4" fill="#2040b0"/><path d="M0 5 L6 2" stroke="#000" stroke-width="2"/></svg>
<div class="t" style="left:70px;top:396px;clip-path:inset(0 0 5px 0)">Ж</div>
<div class="a" style="left:10px;top:401px;width:9px;height:1px;background:#404040"></div>
<div class="a" style="left:226px;top:401px;width:630px;height:1px;background:#404040"></div>
<div class="a" style="left:19px;top:401px;width:104px;height:19px;background:#e9e8e7;border-left:1px solid #fff;border-right:1px solid #404040;border-bottom:1px solid #404040;border-bottom-left-radius:3px"></div>
<svg class="a" style="left:25px;top:404px;" width="15" height="14" viewBox="0 0 15 14"><rect x="0.5" y="2.5" width="9" height="9" fill="#fff" stroke="#203070"/><rect x="4.5" y="4.5" width="9" height="9" fill="#d0d8f0" stroke="#203070"/><rect x="0.5" y="2.5" width="9" height="2" fill="#3050b0"/><path d="M6 8 L12 8 M6 10 L12 10 M6 12 L12 12" stroke="#203070"/></svg>
<div class="t" style="left:43px;top:405px;font-weight:bold;letter-spacing:0.55px">Метаданные</div>
<div class="a" style="left:123px;top:403px;width:103px;height:17px;background:#e9e8e7;border-right:1px solid #404040;border-bottom:1px solid #404040"></div>
<svg class="a" style="left:131px;top:404px;" width="15" height="14" viewBox="0 0 15 14"><circle cx="9" cy="5" r="4.5" fill="#e0d020" stroke="#000"/><rect x="1" y="7" width="9" height="7" fill="#2040c0" stroke="#000"/><circle cx="12" cy="11" r="1.6" fill="#20a0a0"/></svg>
<div class="t" style="left:148px;top:405px;">Интерфейсы</div>
<div class="a" style="left:226px;top:128px;width:543px;height:385px;border-radius:7px 7px 0 0;background:#2458d8;border:1px solid #1238b0"></div>
<div class="a" style="left:227px;top:129px;width:541px;height:24px;border-radius:6px 6px 0 0;background:linear-gradient(#5a94f4 0,#4a86ee 3px,#3a74e4 7px,#2e66da 12px,#2858d0 17px,#1e4cc0 21px,#1a40b0 24px)"></div>
<div class="a" style="left:230px;top:153px;width:535px;height:356px;background:#e9e8e7"></div>
<div class="a" style="left:227px;top:152px;width:2px;height:360px;background:#5a96f4"></div>
<div class="a" style="left:766px;top:152px;width:2px;height:360px;background:#5a96f4"></div>
<div class="a" style="left:227px;top:510px;width:541px;height:2px;background:#5a96f4"></div>
<svg class="a" style="left:234px;top:136px;" width="11" height="12" viewBox="0 0 11 12"><rect x="0.5" y="0.5" width="10" height="11" fill="#fff" stroke="#000"/><path d="M2 3.5 L8 3.5 M2 5.5 L8 5.5 M2 7.5 L8 7.5 M2 9.5 L8 9.5" stroke="#000"/></svg>
<div class="t" style="left:251px;top:137px;font-size:11px;font-weight:bold;color:#fff;letter-spacing:0.87px;line-height:13px">Документ Приход</div>
<div class="a" style="left:700px;top:134px;width:19px;height:16px;border:1px solid #e0e8fa;border-radius:3px;background:linear-gradient(135deg,#4a80ee 0,#4a80ee 55%,#2a58cc 100%)"></div>
<div class="a" style="left:722px;top:134px;width:19px;height:16px;border:1px solid #e0e8fa;border-radius:3px;background:linear-gradient(135deg,#4a80ee 0,#4a80ee 55%,#2a58cc 100%)"></div>
<div class="a" style="left:744px;top:134px;width:19px;height:16px;border:1px solid #e0e8fa;border-radius:3px;background:linear-gradient(135deg,#e86a3c 0,#e86a3c 55%,#c84a20 100%)"></div>
<div class="a" style="left:705px;top:142px;width:7px;height:3px;background:#fff"></div>
<div class="a" style="left:727px;top:138px;width:9px;height:8px;border:1px solid #fff;border-top-width:2px"></div>
<svg class="a" style="left:749px;top:137px;" width="9" height="9" viewBox="0 0 9 9"><path d="M1 1 L8 8 M8 1 L1 8" stroke="#fff" stroke-width="1.8"/></svg>
<div class="t" style="left:243px;top:163px;"><span class="u">И</span>дентификатор:</div>
<div class="a" style="left:327px;top:160px;width:129px;height:16px;background:#fff;border-top:2px solid #a4a29c;border-left:2px solid #a4a29c;border-bottom:1px solid #fff;border-right:1px solid #fff"></div>
<div class="t" style="left:330px;top:163px;">Приход</div>
<div class="a" style="left:331px;top:162px;width:1px;height:12px;background:#000"></div>
<div class="t" style="left:243px;top:183px;"><span class="u">К</span>омментарий:</div>
<div class="a" style="left:327px;top:180px;width:167px;height:15px;background:#fff;border-top:2px solid #a4a29c;border-left:2px solid #a4a29c;border-bottom:1px solid #fff;border-right:1px solid #fff"></div>
<div class="t" style="left:511px;top:163px;"><span class="u">Ж</span>урнал:</div>
<div class="a" style="left:586px;top:161px;width:166px;height:16px;background:#fff;border-top:2px solid #a4a29c;border-left:2px solid #a4a29c;border-bottom:1px solid #fff;border-right:1px solid #fff"></div>
<div class="a" style="left:735px;top:163px;width:16px;height:13px;background:#e9e8e7;border-right:1px solid #a4a29c;border-bottom:1px solid #a4a29c"></div>
<svg class="a" style="left:739px;top:167px;" width="7" height="4" viewBox="0 0 7 4"><path d="M0 0 L7 0 L3.5 4Z" fill="#000"/></svg>
<div class="t" style="left:590px;top:164px;">ПриходРасход</div>
<div class="t" style="left:511px;top:182px;"><span class="u">С</span>иноним:</div>
<div class="a" style="left:586px;top:180px;width:166px;height:15px;background:#fff;border-top:2px solid #a4a29c;border-left:2px solid #a4a29c;border-bottom:1px solid #fff;border-right:1px solid #fff"></div>
<div class="a" style="left:243px;top:205px;width:251px;height:123px;border:1px solid #a9a8a3"></div>
<div class="t" style="left:252px;top:199px;background:#e9e8e7;padding:0 2px 0 2px;margin-left:-2px">Реквизиты шапки</div>
<div class="a" style="left:252px;top:214px;width:202px;height:86px;background:#fff;border-right:none;border-bottom:none;border-top:2px solid #a4a29c;border-left:2px solid #a4a29c;border-bottom:1px solid #fff;border-right:1px solid #fff"></div>
<div class="a" style="left:253px;top:216px;width:201px;height:10px;background:#3a5fc6"></div>
<div class="t" style="left:256px;top:216px;color:#fff">Автор</div>
<div class="t" style="left:256px;top:226px;">Жанр</div>
<div class="t" style="left:256px;top:237px;">ГодИздания</div>
<div class="t" style="left:256px;top:248px;">Количество</div>
<div class="t" style="left:256px;top:259px;">Статус</div>
<div class="t" style="left:256px;top:270px;">Поставщик</div>
<div class="a" style="left:461px;top:214px;width:26px;height:20px;background:#e9e8e7;border-right:1px solid #5c5c64;border-bottom:1px solid #5c5c64;box-shadow:inset -1px -1px 0 #b4b2ae"></div>
<div class="a" style="left:461px;top:237px;width:26px;height:20px;background:#e9e8e7;border-right:1px solid #5c5c64;border-bottom:1px solid #5c5c64;box-shadow:inset -1px -1px 0 #b4b2ae"></div>
<div class="a" style="left:461px;top:258px;width:26px;height:20px;background:#e9e8e7;border-right:1px solid #5c5c64;border-bottom:1px solid #5c5c64;box-shadow:inset -1px -1px 0 #b4b2ae"></div>
<svg class="a" style="left:468px;top:218px;" width="11" height="12" viewBox="0 0 11 12"><path d="M3 12 L8 12 L8 6 L11 6 L5.5 0 L0 6 L3 6Z" fill="#000"/></svg>
<svg class="a" style="left:468px;top:241px;" width="11" height="12" viewBox="0 0 11 12"><path d="M3 0 L8 0 L8 6 L11 6 L5.5 12 L0 6 L3 6Z" fill="#000"/></svg>
<svg class="a" style="left:467px;top:261px;" width="14" height="13" viewBox="0 0 14 13"><path d="M1 5 L3 1 L5 5 M1.8 3.5 L4.2 3.5" stroke="#2020a0" fill="none" stroke-width="1.2"/><path d="M1 7 L5 7 L1 12 L5 12" stroke="#2020a0" fill="none" stroke-width="1.6"/><path d="M10 0 L10 12 M8 0 L12 0 M8 9 L10 12 L12 9" stroke="#000" fill="none"/></svg>
<div class="a" style="left:252px;top:305px;width:58px;height:20px;background:#e9e8e7;border-right:1px solid #5c5c64;border-bottom:1px solid #5c5c64;box-shadow:inset -1px -1px 0 #b4b2ae"></div>
<div class="t" style="left:252px;top:309px;color:#000;width:56px;text-align:center;">Новый</div>
<div class="a" style="left:312px;top:305px;width:60px;height:20px;background:#e9e8e7;border-right:1px solid #5c5c64;border-bottom:1px solid #5c5c64;box-shadow:inset -1px -1px 0 #b4b2ae"></div>
<div class="t" style="left:312px;top:309px;color:#000;width:58px;text-align:center;">Изменить</div>
<div class="a" style="left:376px;top:305px;width:59px;height:20px;background:#e9e8e7;border-right:1px solid #5c5c64;border-bottom:1px solid #5c5c64;box-shadow:inset -1px -1px 0 #b4b2ae"></div>
<div class="t" style="left:376px;top:309px;color:#000;width:57px;text-align:center;">Удалить</div>
<div class="a" style="left:501px;top:205px;width:251px;height:123px;border:1px solid #a9a8a3"></div>
<div class="t" style="left:510px;top:199px;background:#e9e8e7;padding:0 2px 0 2px;margin-left:-2px">Реквизиты табличной части</div>
<div class="a" style="left:511px;top:214px;width:203px;height:86px;background:#fff;border-right:none;border-bottom:none;border-top:2px solid #a4a29c;border-left:2px solid #a4a29c;border-bottom:1px solid #fff;border-right:1px solid #fff"></div>
<div class="a" style="left:720px;top:214px;width:26px;height:20px;background:#e9e8e7;border-right:1px solid #5c5c64;border-bottom:1px solid #5c5c64;box-shadow:inset -1px -1px 0 #b4b2ae"></div>
<div class="a" style="left:720px;top:237px;width:26px;height:20px;background:#e9e8e7;border-right:1px solid #5c5c64;border-bottom:1px solid #5c5c64;box-shadow:inset -1px -1px 0 #b4b2ae"></div>
<div class="a" style="left:720px;top:258px;width:26px;height:20px;background:#e9e8e7;border-right:1px solid #5c5c64;border-bottom:1px solid #5c5c64;box-shadow:inset -1px -1px 0 #b4b2ae"></div>
<svg class="a" style="left:727px;top:218px;" width="11" height="12" viewBox="0 0 11 12"><path d="M3 12 L8 12 L8 6 L11 6 L5.5 0 L0 6 L3 6Z" fill="#000"/></svg>
<svg class="a" style="left:727px;top:241px;" width="11" height="12" viewBox="0 0 11 12"><path d="M3 0 L8 0 L8 6 L11 6 L5.5 12 L0 6 L3 6Z" fill="#000"/></svg>
<svg class="a" style="left:726px;top:261px;" width="14" height="13" viewBox="0 0 14 13"><path d="M1 5 L3 1 L5 5 M1.8 3.5 L4.2 3.5" stroke="#2020a0" fill="none" stroke-width="1.2"/><path d="M1 7 L5 7 L1 12 L5 12" stroke="#2020a0" fill="none" stroke-width="1.6"/><path d="M10 0 L10 12 M8 0 L12 0 M8 9 L10 12 L12 9" stroke="#000" fill="none"/></svg>
<div class="a" style="left:511px;top:305px;width:57px;height:20px;background:#e9e8e7;border-right:1px solid #5c5c64;border-bottom:1px solid #5c5c64;box-shadow:inset -1px -1px 0 #b4b2ae"></div>
<div class="t" style="left:511px;top:309px;color:#000;width:55px;text-align:center;font-weight:bold;">Новый</div>
<div class="a" style="left:571px;top:305px;width:58px;height:20px;background:#e9e8e7;border-right:1px solid #5c5c64;border-bottom:1px solid #5c5c64;box-shadow:inset -1px -1px 0 #b4b2ae"></div>
<div class="t" style="left:571px;top:309px;color:#a8a6a0;width:56px;text-align:center;text-shadow:1px 1px 0 #fff;">Изменить</div>
<div class="a" style="left:632px;top:305px;width:59px;height:20px;background:#e9e8e7;border-right:1px solid #5c5c64;border-bottom:1px solid #5c5c64;box-shadow:inset -1px -1px 0 #b4b2ae"></div>
<div class="t" style="left:632px;top:309px;color:#a8a6a0;width:57px;text-align:center;text-shadow:1px 1px 0 #fff;">Удалить</div>
<div class="a" style="left:243px;top:336px;width:509px;height:64px;border:1px solid #a9a8a3"></div>
<div class="t" style="left:252px;top:330px;background:#e9e8e7;padding:0 2px 0 2px;margin-left:-2px">Номер</div>
<div class="t" style="left:253px;top:347px;"><span class="u">Н</span>умератор:</div>
<div class="a" style="left:341px;top:344px;width:151px;height:16px;background:#fff;border-top:2px solid #a4a29c;border-left:2px solid #a4a29c;border-bottom:1px solid #fff;border-right:1px solid #fff"></div>
<div class="a" style="left:475px;top:346px;width:16px;height:13px;background:#e9e8e7;border-right:1px solid #a4a29c;border-bottom:1px solid #a4a29c"></div>
<svg class="a" style="left:479px;top:350px;" width="7" height="4" viewBox="0 0 7 4"><path d="M0 0 L7 0 L3.5 4Z" fill="#000"/></svg>
<div class="t" style="left:345px;top:347px;">&lt;&lt; Не назначен &gt;&gt;</div>
<div class="t" style="left:253px;top:366px;"><span class="u">П</span>ериодичность:</div>
<div class="a" style="left:341px;top:364px;width:151px;height:15px;background:#fff;border-top:2px solid #a4a29c;border-left:2px solid #a4a29c;border-bottom:1px solid #fff;border-right:1px solid #fff"></div>
<div class="a" style="left:475px;top:366px;width:16px;height:12px;background:#e9e8e7;border-right:1px solid #a4a29c;border-bottom:1px solid #a4a29c"></div>
<svg class="a" style="left:479px;top:370px;" width="7" height="4" viewBox="0 0 7 4"><path d="M0 0 L7 0 L3.5 4Z" fill="#000"/></svg>
<div class="t" style="left:345px;top:367px;">По всем данного вида</div>
<div class="a" style="left:252px;top:385px;width:11px;height:10px;background:#e9e8e7;border-top:2px solid #8c8a86;border-left:2px solid #8c8a86"></div>
<svg class="a" style="left:255px;top:387px;" width="8" height="7" viewBox="0 0 8 7"><path d="M0.8 3 L3 5.5 L7.2 0.8" stroke="#000" stroke-width="1.9" fill="none"/></svg>
<div class="t" style="left:270px;top:385px;">Автоматическая нумерация</div>
<div class="a" style="left:501px;top:343px;width:240px;height:35px;border:1px solid #a9a8a3"></div>
<div class="t" style="left:510px;top:337px;background:#e9e8e7;padding:0 2px 0 2px;margin-left:-2px">Тип</div>
<div class="a" style="left:513px;top:351px;width:10px;height:10px;border-radius:50%;background:#fff;border-top:1px solid #a4a29c;border-left:1px solid #a4a29c"></div>
<div class="a" style="left:516px;top:354px;width:4px;height:4px;border-radius:50%;background:#000"></div>
<div class="t" style="left:529px;top:352px;">Числовой</div>
<div class="a" style="left:513px;top:365px;width:10px;height:10px;border-radius:50%;background:#fff;border-top:1px solid #a4a29c;border-left:1px solid #a4a29c"></div>
<div class="t" style="left:529px;top:365px;">Текстовый</div>
<div class="t" style="left:627px;top:352px;"><span class="u">Д</span>лина:</div>
<div class="a" style="left:680px;top:348px;width:47px;height:16px;background:#fff;border-top:2px solid #a4a29c;border-left:2px solid #a4a29c;border-bottom:1px solid #fff;border-right:1px solid #fff"></div>
<div class="t" style="left:684px;top:351px;">5</div>
<div class="a" style="left:711px;top:350px;width:15px;height:13px;background:#e9e8e7"></div>
<div class="a" style="left:711px;top:356px;width:15px;height:1px;background:#a4a29c"></div>
<svg class="a" style="left:715px;top:351px;" width="7" height="3" viewBox="0 0 7 3"><path d="M0 3 L3.5 0 L7 3Z" fill="#000"/></svg>
<svg class="a" style="left:715px;top:359px;" width="7" height="3" viewBox="0 0 7 3"><path d="M0 0 L3.5 3 L7 0Z" fill="#000"/></svg>
<div class="a" style="left:503px;top:385px;width:11px;height:10px;background:#e9e8e7;border-top:2px solid #8c8a86;border-left:2px solid #8c8a86"></div>
<svg class="a" style="left:506px;top:387px;" width="8" height="7" viewBox="0 0 8 7"><path d="M0.8 3 L3 5.5 L7.2 0.8" stroke="#000" stroke-width="1.9" fill="none"/></svg>
<div class="t" style="left:520px;top:385px;"><span class="u">К</span>онтроль уникальности</div>
<div class="a" style="left:243px;top:405px;width:509px;height:54px;border:1px solid #a9a8a3"></div>
<div class="a" style="left:252px;top:412px;width:11px;height:10px;background:#e9e8e7;border-top:2px solid #8c8a86;border-left:2px solid #8c8a86"></div>
<svg class="a" style="left:255px;top:414px;" width="8" height="7" viewBox="0 0 8 7"><path d="M0.8 3 L3 5.5 L7.2 0.8" stroke="#000" stroke-width="1.9" fill="none"/></svg>
<div class="t" style="left:270px;top:412px;">Разрешить проведение документа</div>
<div class="a" style="left:252px;top:427px;width:11px;height:10px;background:#e9e8e7;border-top:2px solid #8c8a86;border-left:2px solid #8c8a86"></div>
<svg class="a" style="left:255px;top:429px;" width="8" height="7" viewBox="0 0 8 7"><path d="M0.8 3 L3 5.5 L7.2 0.8" stroke="#000" stroke-width="1.9" fill="none"/></svg>
<div class="t" style="left:270px;top:428px;">Автоматическое удаление движений</div>
<div class="a" style="left:252px;top:443px;width:11px;height:10px;background:#e9e8e7;border-top:2px solid #8c8a86;border-left:2px solid #8c8a86"></div>
<svg class="a" style="left:255px;top:445px;" width="8" height="7" viewBox="0 0 8 7"><path d="M0.8 3 L3 5.5 L7.2 0.8" stroke="#000" stroke-width="1.9" fill="none"/></svg>
<div class="t" style="left:270px;top:444px;">Автоматическая нумерация строк</div>
<div class="a" style="left:503px;top:412px;width:11px;height:10px;background:#e9e8e7;border-top:2px solid #c4c2be;border-left:2px solid #c4c2be"></div>
<div class="t" style="left:520px;top:411px;color:#a8a6a0;text-shadow:1px 1px 0 #fff"><span class="u">Б</span>ухгалтерский учет</div>
<div class="a" style="left:503px;top:427px;width:11px;height:10px;background:#e9e8e7;border-top:2px solid #8c8a86;border-left:2px solid #8c8a86"></div>
<div class="t" style="left:520px;top:428px;"><span class="u">Р</span>асчет</div>
<div class="a" style="left:503px;top:443px;width:11px;height:10px;background:#e9e8e7;border-top:2px solid #8c8a86;border-left:2px solid #8c8a86"></div>
<svg class="a" style="left:506px;top:445px;" width="8" height="7" viewBox="0 0 8 7"><path d="M0.8 3 L3 5.5 L7.2 0.8" stroke="#000" stroke-width="1.9" fill="none"/></svg>
<div class="t" style="left:520px;top:444px;">Опе<span class="u">р</span>ативный учет</div>
<div class="t" style="left:243px;top:469px;">Создавать операцию:</div>
<div class="a" style="left:353px;top:466px;width:139px;height:16px;background:#e9e8e7;border-top:2px solid #a4a29c;border-left:2px solid #a4a29c;border-bottom:1px solid #fff;border-right:1px solid #fff"></div>
<div class="a" style="left:475px;top:468px;width:16px;height:13px;background:#e9e8e7;border-right:1px solid #a4a29c;border-bottom:1px solid #a4a29c"></div>
<svg class="a" style="left:479px;top:472px;" width="7" height="4" viewBox="0 0 7 4"><path d="M0 0 L7 0 L3.5 4Z" fill="#b0aea8"/></svg>
<div class="a" style="left:503px;top:470px;width:11px;height:10px;background:#e9e8e7;border-top:2px solid #c4c2be;border-left:2px solid #c4c2be"></div>
<div class="t" style="left:520px;top:469px;color:#a8a6a0;text-shadow:1px 1px 0 #fff">Редактировать операцию</div>
<div class="a" style="left:242px;top:487px;width:109px;height:20px;background:#e9e8e7;border-right:1px solid #5c5c64;border-bottom:1px solid #5c5c64;box-shadow:inset -1px -1px 0 #b4b2ae"></div>
<div class="t" style="left:242px;top:491px;color:#000;width:107px;text-align:left;padding-left:4px;"><span class="u">В</span>вод на основании...</div>
<div class="a" style="left:417px;top:487px;width:108px;height:20px;background:#e9e8e7;border-right:1px solid #5c5c64;border-bottom:1px solid #5c5c64;box-shadow:inset -1px -1px 0 #b4b2ae"></div>
<div class="t" style="left:417px;top:491px;color:#000;width:106px;text-align:center;"><span class="u">О</span>писание</div>
<div class="a" style="left:530px;top:487px;width:110px;height:20px;background:#e9e8e7;border-right:1px solid #5c5c64;border-bottom:1px solid #5c5c64;box-shadow:inset -1px -1px 0 #b4b2ae"></div>
<div class="t" style="left:530px;top:491px;color:#000;width:108px;text-align:center;"><span class="u">Ф</span>орма</div>
<div class="a" style="left:644px;top:487px;width:109px;height:20px;background:#e9e8e7;border-right:1px solid #5c5c64;border-bottom:1px solid #5c5c64;box-shadow:inset -1px -1px 0 #b4b2ae"></div>
<div class="t" style="left:644px;top:491px;color:#000;width:107px;text-align:center;">Модуль <span class="u">Д</span>окумента</div>
</body></html>
